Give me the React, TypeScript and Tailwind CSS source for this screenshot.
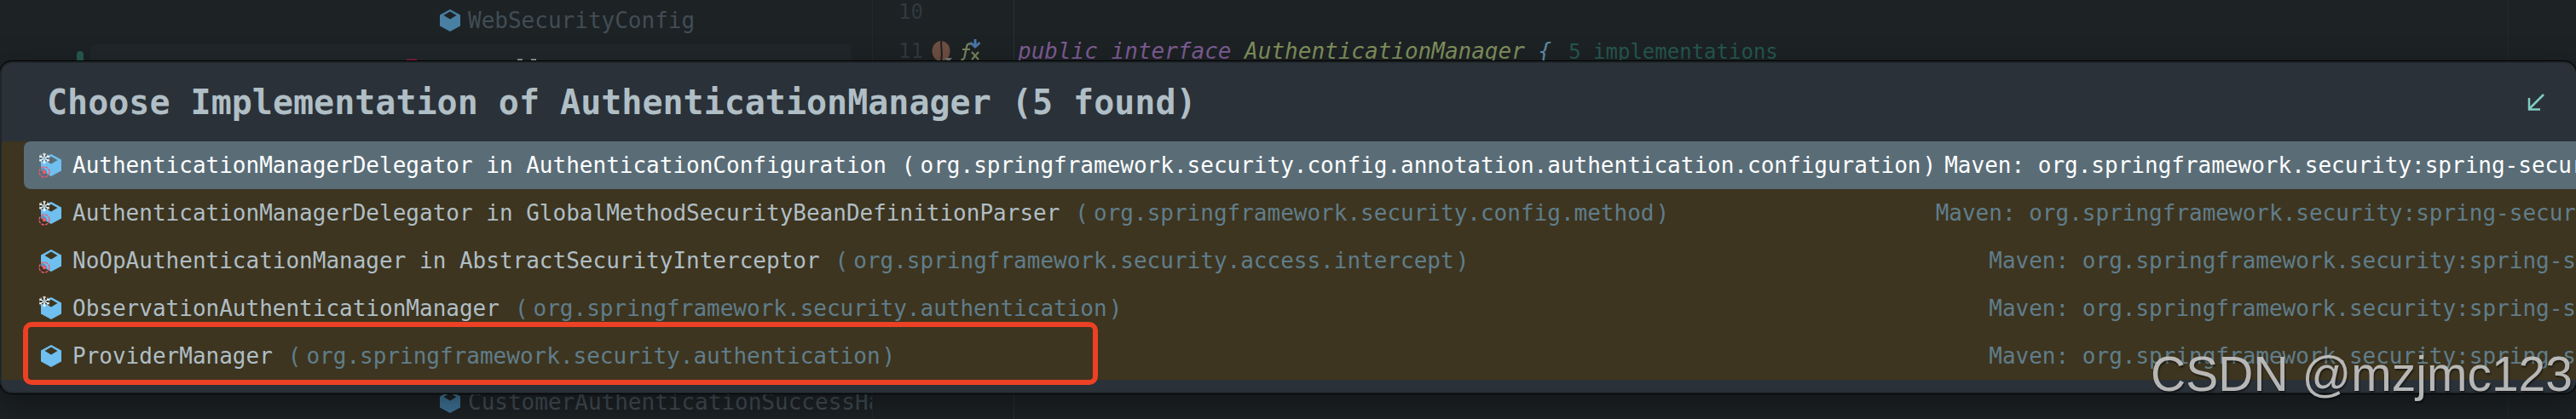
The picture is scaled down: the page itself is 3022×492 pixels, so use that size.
import { clsx } from 'clsx'

type Implementation = {
  name: string
  pkg: string
  location: string
  isFinal?: boolean
  isPrivate?: boolean
}

const implementations: Implementation[] = [
  {
    name: 'AuthenticationManagerDelegator in AuthenticationConfiguration',
    pkg: 'org.springframework.security.config.annotation.authentication.configuration',
    location: 'Maven: org.springframework.security:spring-secur',
    isFinal: true,
    isPrivate: true,
  },
  {
    name: 'AuthenticationManagerDelegator in GlobalMethodSecurityBeanDefinitionParser',
    pkg: 'org.springframework.security.config.method',
    location: 'Maven: org.springframework.security:spring-secur',
    isFinal: true,
    isPrivate: true,
  },
  {
    name: 'NoOpAuthenticationManager in AbstractSecurityInterceptor',
    pkg: 'org.springframework.security.access.intercept',
    location: 'Maven: org.springframework.security:spring-s',
    isPrivate: true,
  },
  {
    name: 'ObservationAuthenticationManager',
    pkg: 'org.springframework.security.authentication',
    location: 'Maven: org.springframework.security:spring-s',
    isFinal: true,
  },
  {
    name: 'ProviderManager',
    pkg: 'org.springframework.security.authentication',
    location: 'Maven: org.springframework.security:spring-s',
  },
]

function ClassIcon({ isFinal, isPrivate, className }: { isFinal?: boolean; isPrivate?: boolean; className?: string }) {
  return (
    <svg aria-hidden="true" viewBox="0 0 28 30" className={clsx('h-[30px] w-7 shrink-0', className)}>
      <path
        fill="currentColor"
        fillRule="evenodd"
        d={
          isFinal
            ? 'M12 3.6 15 2l12 6.500v13L15 28 3 21.500V11l4-2L15 13.500 22.500 9 15 4.800 12 6.500z'
            : 'M15 2 27 8.500v13L15 28 3 21.500v-13zM15 4.500 7.500 9l7.500 4.500L22.500 9z'
        }
      />
      {isFinal && (
        <g stroke="#fff" strokeWidth="1.4" fill="none">
          <path d="M7 .8v12.400M1.200 4l11.600 6M1.200 10l11.600-6" />
          <path d="M5 1.500l2 1.800 2-1.800M5 12.500l2-1.800 2 1.800M1 6l2.500-1L3 2.500M13 8l-2.500 1 .5 2.500M1 8l2.500 1L3 11.500M13 6l-2.500-1 .5-2.500" strokeWidth=".8" />
          <circle cx="7" cy="7" r="1.400" fill="#6fbff0" stroke="none" />
        </g>
      )}
      {isPrivate && (
        <>
          <path d="M3 18.500a6 6 0 0 1 7 8L3 22z" fill="#3d4238" opacity=".35" />
          <circle cx="7" cy="23" r="6" fill="none" stroke="#f0566e" strokeWidth="1.3" strokeDasharray="3.500 1.200" />
          <circle cx="7" cy="23" r="2.2" fill="#f0566e" />
        </>
      )}
    </svg>
  )
}

function BeanIcon() {
  return (
    <svg aria-hidden="true" viewBox="0 0 24 28" className="h-7 w-6 shrink-0">
      <ellipse cx="11" cy="14" rx="10.5" ry="12" fill="#6f4f42" />
      <path d="M12 1c-3 6 2 10-1 26" fill="none" stroke="#1d2226" strokeWidth="2" />
      <path d="M15 22h9l-4.500 5z" fill="#777b7d" />
    </svg>
  )
}

function FunctionIcon() {
  return (
    <svg aria-hidden="true" viewBox="0 0 28 28" className="h-7 w-7 shrink-0" fill="none">
      <path d="M12 6c-3-1.500-4.500 0-5 3L4.500 21c-.5 2.500-2 3.500-4 2.500M2 12h9" stroke="#76875a" strokeWidth="2.200" />
      <path d="m13 15 8 9M21 15l-8 9" stroke="#76875a" strokeWidth="2.200" />
      <path d="M17 0v9M11.500 4l5.500 5 5.500-5" stroke="#4a77a8" strokeWidth="3" />
    </svg>
  )
}

function ProjectTree() {
  return (
    <aside className="flex w-[1024px] shrink-0 flex-col overflow-hidden border-r border-[#22292c] text-[#414d54]">
      <div className="flex h-13 shrink-0 items-center gap-2 pb-1 pl-[513px]">
        <ClassIcon className="text-[#487fa2]" />
        <span>WebSecurityConfig</span>
      </div>
      <div className="flex h-14 shrink-0 pl-[90px]">
        <span className="mt-2 w-2 rounded-t-full bg-[#285a52]" />
        <div className="mr-6 ml-2 flex flex-1 gap-[118px] rounded-lg bg-[#20272a] pt-[17px] pl-[371px]">
          <span className="h-1 w-3 bg-[#7a1f3f]" />
          <span className="flex gap-2.5">
            <span className="h-1 w-1.5 bg-[#8f9496]" />
            <span className="h-1 w-1.5 bg-[#8f9496]" />
          </span>
        </div>
      </div>
      <div className="h-[336px] shrink-0" />
      <div className="flex h-14 shrink-0 items-center gap-2 pl-[513px]">
        <ClassIcon className="text-[#3f7396]" />
        <span>CustomerAuthenticationSuccessHandler</span>
      </div>
    </aside>
  )
}

function Editor() {
  return (
    <main className="flex min-w-0 flex-1">
      <div className="flex w-[166px] shrink-0 flex-col border-r border-[#2b3134] pl-[30px] text-2xl text-[#2f3a3e]">
        <div className="h-9 leading-[28px]">10</div>
        <div className="flex h-12 items-center gap-2.5 leading-[48px]">
          <span>11</span>
          <BeanIcon />
          <FunctionIcon />
        </div>
      </div>
      <pre className="flex-1 pt-9 pl-1 font-[inherit] leading-[48px]">
        <span className="text-[#7d5c94] italic">public interface </span>
        <span className="text-[#80905c] italic">AuthenticationManager </span>
        <span className="text-[#5f8ca6] italic">{'{'}</span>
        <span className="ml-5 text-2xl text-[#25584f]">5 implementations</span>
      </pre>
      <div className="w-20 border-l border-[#22282b]" />
    </main>
  )
}

function ImplementationRow({ item, selected }: { item: Implementation; selected?: boolean }) {
  return (
    <button
      type="button"
      role="option"
      aria-selected={!!selected}
      className={clsx(
        'flex h-14 w-full items-center rounded-l-lg pl-[17px] text-left',
        selected ? 'bg-[#5a6d77] text-white' : 'text-[#b0bec5]',
      )}
    >
      <ClassIcon isFinal={item.isFinal} isPrivate={item.isPrivate} className="text-[#6fbff0]" />
      <span className="ml-3 shrink-0">{item.name}</span>
      <span className={clsx('ml-4.5 flex shrink-0', !selected && 'text-[#607d8b]')}>
        <span>(</span>
        <span className="mr-0.5 ml-1.5">{item.pkg}</span>
        <span>)</span>
      </span>
      <span className={clsx('ml-auto shrink-0 pl-2.5', !selected && 'text-[#607d8b]')}>{item.location}</span>
    </button>
  )
}

function ImplementationPopup() {
  return (
    <section
      aria-label="Choose Implementation"
      className="absolute inset-x-0 top-[72px] overflow-hidden rounded-[14px] border-2 border-r-0 border-[#20272b] bg-[#2a3138] shadow-[0_0_0_1px_#000,0_12px_36px_4px_rgba(0,0,0,0.35)]"
    >
      <header className="flex h-[92px] items-center justify-between pr-[37px] pl-[53px]">
        <h1 className="text-[40px] font-bold whitespace-nowrap text-[#b0bec5]">
          Choose Implementation of AuthenticationManager (5 found)
        </h1>
        <button type="button" aria-label="Open in find window" className="text-[#80cbc4]">
          <svg viewBox="0 0 20 20" className="size-5" fill="none" stroke="currentColor" strokeWidth="2.5">
            <path d="M19 1 2 18M2 5v13.500h13" />
          </svg>
        </button>
      </header>
      <div role="listbox" aria-label="Implementations" className="relative bg-[#3d3520] pl-[26px] whitespace-nowrap">
        {implementations.map((item, i) => (
          <ImplementationRow key={i} item={item} selected={i === 0} />
        ))}
        {/* highlight around the last entry */}
        <div className="pointer-events-none absolute -bottom-1.5 left-[25px] h-[74px] w-[1261px] rounded-[10px] border-6 border-[#ec4125]" />
      </div>
      <footer className="h-3.5" />
    </section>
  )
}

export default function App() {
  return (
    <div className="relative h-screen overflow-hidden bg-[#1d2225] font-['DejaVu_Sans_Mono',monospace] text-[26px] whitespace-nowrap">
      <div className="flex h-full">
        <ProjectTree />
        <Editor />
      </div>
      <ImplementationPopup />
      <div className="absolute right-1 bottom-6 font-['Liberation_Sans',sans-serif] text-[57px] leading-none text-[#c8c8c8]/90 [text-shadow:1px_2px_2px_rgba(0,0,0,0.5)]">
        CSDN @mzjmc123
      </div>
    </div>
  )
}
